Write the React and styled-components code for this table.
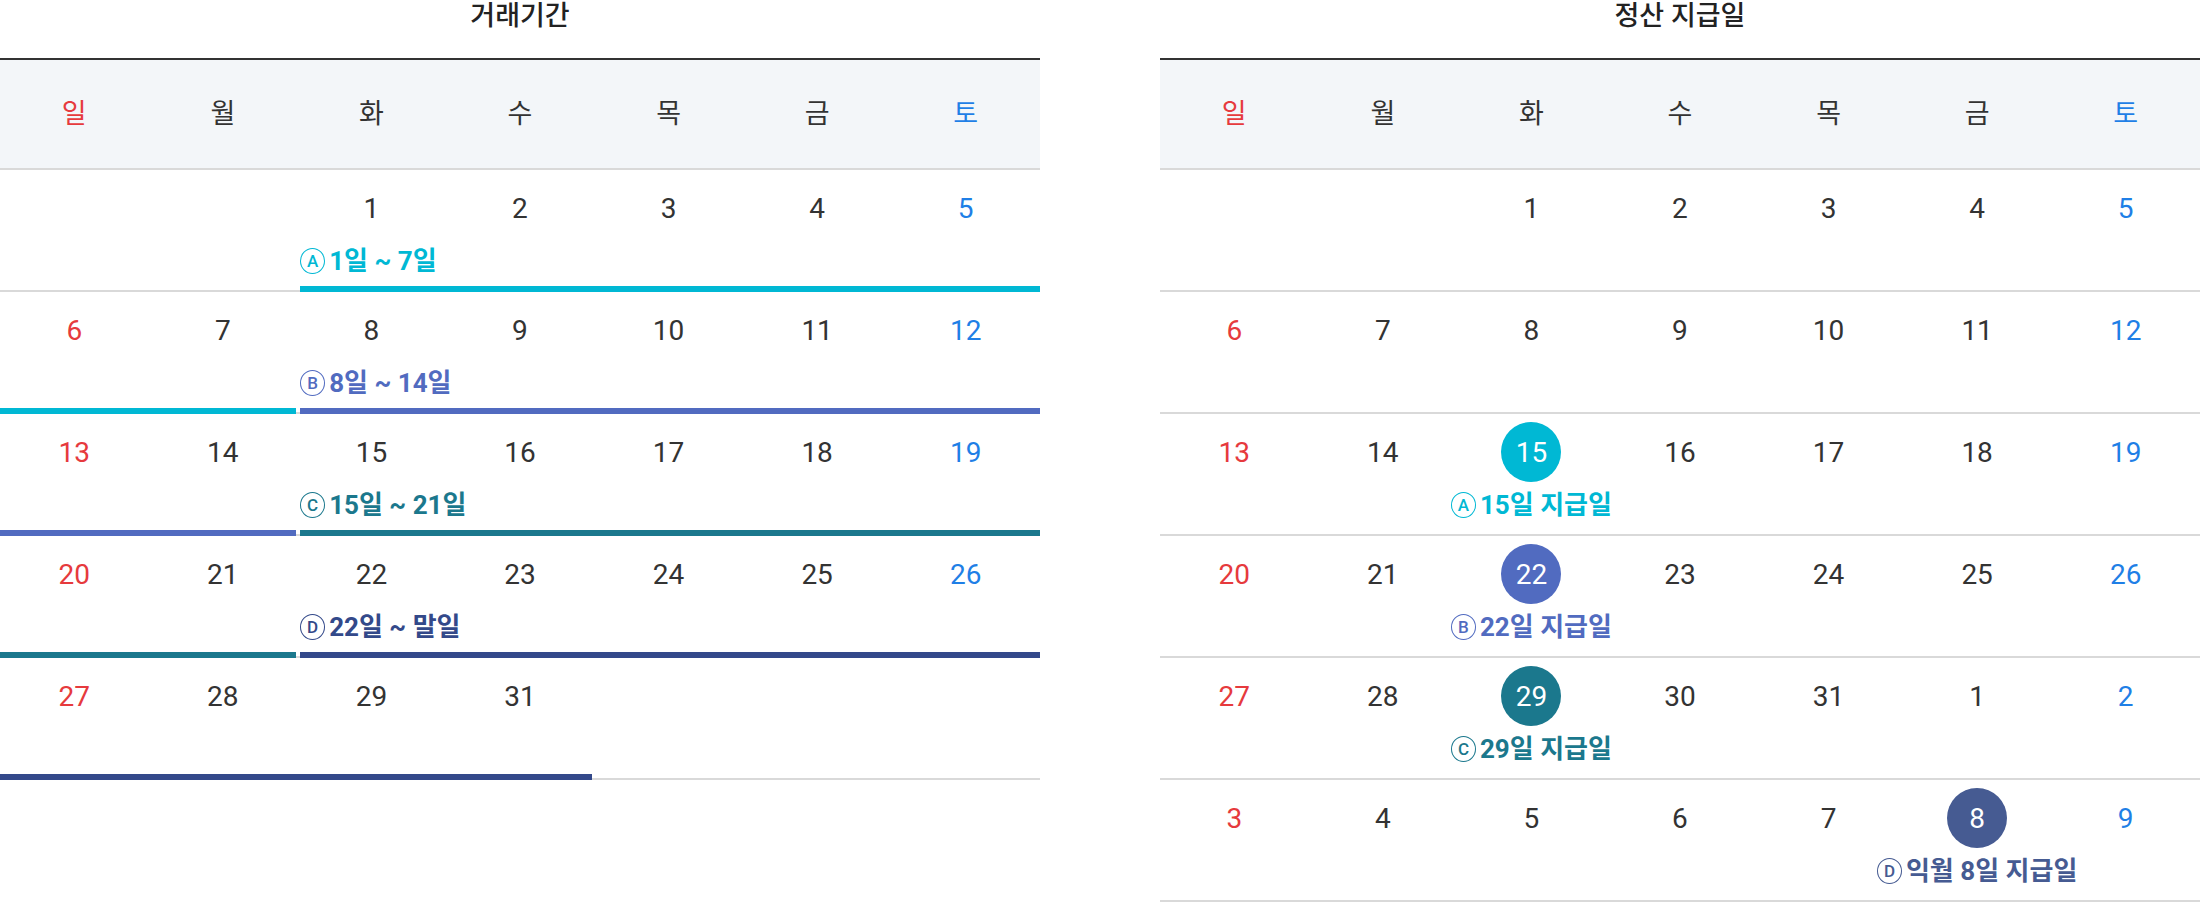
import React from "react";
import styled, { createGlobalStyle } from "styled-components";

const C = {
  cyan: "#00b8d4",
  purple: "#516bc0",
  teal: "#1b788d",
  navy: "#33498a",
  navy2: "#465b92",
  red: "#e63a3d",
  blue: "#1f7fe6",
  text: "#333333",
  line: "#d9d9d9",
  head: "#f3f6f9",
};

const Global = createGlobalStyle`
  html, body { margin: 0; padding: 0; background: #fff; }
  body { font-family: Roboto, "Noto Sans CJK KR", sans-serif; color: ${C.text}; }
`;

const Page = styled.div`
  display: flex;
  gap: 120px;
  width: 2200px;
`;

const Panel = styled.section`
  width: 1040px;
  display: flex;
  flex-direction: column;
`;

const Title = styled.h2`
  margin: 0;
  height: 58px;
  font-size: 27px;
  font-weight: 500;
  line-height: 32px;
  text-align: center;
  color: #222;
`;

const Head = styled.div`
  display: grid;
  grid-template-columns: repeat(7, 1fr);
  height: 108px;
  align-items: center;
  background: ${C.head};
  border-top: 2px solid #333;
  border-bottom: 2px solid ${C.line};
`;

const toneColor = (t) => (t === "sun" ? C.red : t === "sat" ? C.blue : C.text);

const Weekday = styled.div`
  text-align: center;
  font-size: 27px;
  line-height: 32px;
  color: ${(p) => toneColor(p.$tone)};
`;

const Week = styled.div`
  display: flex;
  flex-direction: column;
`;

const Cells = styled.div`
  display: grid;
  grid-template-columns: repeat(7, 1fr);
  height: 116px;
`;

const Cell = styled.div`
  display: flex;
  flex-direction: column;
  align-items: ${(p) => (p.$start ? "flex-start" : "center")};
  padding-top: 8px;
  min-width: 0;
`;

const Day = styled.div`
  align-self: center;
  width: 60px;
  height: 60px;
  border-radius: 50%;
  display: flex;
  align-items: center;
  justify-content: center;
  font-size: 28px;
  background: ${(p) => p.$bg || "transparent"};
  color: ${(p) => (p.$bg ? "#fff" : toneColor(p.$tone))};
`;

const Label = styled.div`
  margin-top: 8px;
  padding-left: ${(p) => (p.$start ? "3px" : "0")};
  display: flex;
  align-items: center;
  white-space: nowrap;
  font-size: 26px;
  line-height: 30px;
  font-weight: 700;
  color: ${(p) => p.$color};
  align-self: ${(p) => (p.$start ? "flex-start" : "center")};
`;

const Mark = styled.span`
  display: inline-flex;
  align-items: center;
  justify-content: center;
  box-sizing: border-box;
  width: 25px;
  height: 26px;
  margin-right: 4px;
  border: 1.6px solid currentColor;
  border-radius: 50%;
  font-family: Roboto, sans-serif;
  font-size: 17px;
  line-height: 1;
  font-weight: 500;
`;

const Track = styled.div`
  display: flex;
  align-items: flex-end;
  height: 6px;
  background: linear-gradient(to top, ${C.line} 2px, transparent 2px);
`;

const Segment = styled.div`
  height: 6px;
  background: ${(p) => p.$color || "transparent"};
  flex: ${(p) => (p.$fill ? "1" : "0 0 auto")};
  margin-right: ${(p) => (p.$gap ? "4px" : "0")};
`;

const weekdays = ["일", "월", "화", "수", "목", "금", "토"];
const tone = (i) => (i === 0 ? "sun" : i === 6 ? "sat" : "");

const range = (a, b) => Array.from({ length: b - a + 1 }, (_, i) => a + i);

const leftWeeks = [
  {
    days: [null, null, 1, 2, 3, 4, 5],
    label: { col: 2, mark: "A", text: "1일 ~ 7일", color: C.cyan },
    segs: [{ w: "calc(200% / 7 + 3px)" }, { color: C.cyan, fill: true }],
  },
  {
    days: range(6, 12),
    label: { col: 2, mark: "B", text: "8일 ~ 14일", color: C.purple },
    segs: [{ w: "calc(200% / 7 - 1px)", color: C.cyan, gap: true }, { color: C.purple, fill: true }],
  },
  {
    days: range(13, 19),
    label: { col: 2, mark: "C", text: "15일 ~ 21일", color: C.teal },
    segs: [{ w: "calc(200% / 7 - 1px)", color: C.purple, gap: true }, { color: C.teal, fill: true }],
  },
  {
    days: range(20, 26),
    label: { col: 2, mark: "D", text: "22일 ~ 말일", color: C.navy },
    segs: [{ w: "calc(200% / 7 - 1px)", color: C.teal, gap: true }, { color: C.navy, fill: true }],
  },
  {
    days: [27, 28, 29, 31, null, null, null],
    segs: [{ w: "calc(400% / 7 - 2px)", color: C.navy }],
  },
];

const rightWeeks = [
  { days: [null, null, 1, 2, 3, 4, 5] },
  { days: range(6, 12) },
  { days: range(13, 19), pay: { col: 2, bg: C.cyan, mark: "A", text: "15일 지급일" } },
  { days: range(20, 26), pay: { col: 2, bg: C.purple, mark: "B", text: "22일 지급일" } },
  { days: [27, 28, 29, 30, 31, 1, 2], pay: { col: 2, bg: C.teal, mark: "C", text: "29일 지급일" } },
  { days: range(3, 9), pay: { col: 5, bg: C.navy2, mark: "D", text: "익월 8일 지급일" } },
];

function Header() {
  return (
    <Head>
      {weekdays.map((w, i) => (
        <Weekday key={w} $tone={tone(i)}>
          {w}
        </Weekday>
      ))}
    </Head>
  );
}

function PeriodCalendar() {
  return (
    <Panel>
      <Title>거래기간</Title>
      <Header />
      {leftWeeks.map((wk, r) => (
        <Week key={r}>
          <Cells>
            {wk.days.map((d, i) => {
              const hasLabel = wk.label && wk.label.col === i;
              return (
                <Cell key={i} $start={hasLabel}>
                  {d !== null && <Day $tone={tone(i)}>{d}</Day>}
                  {hasLabel && (
                    <Label $start $color={wk.label.color}>
                      <Mark>{wk.label.mark}</Mark>
                      {wk.label.text}
                    </Label>
                  )}
                </Cell>
              );
            })}
          </Cells>
          <Track>
            {wk.segs.map((s, k) => (
              <Segment key={k} $color={s.color} $fill={s.fill} $gap={s.gap} style={s.w ? { width: s.w } : undefined} />
            ))}
          </Track>
        </Week>
      ))}
    </Panel>
  );
}

function PayCalendar() {
  return (
    <Panel>
      <Title>정산 지급일</Title>
      <Header />
      {rightWeeks.map((wk, r) => (
        <Week key={r}>
          <Cells>
            {wk.days.map((d, i) => {
              const pay = wk.pay && wk.pay.col === i ? wk.pay : null;
              return (
                <Cell key={i}>
                  {d !== null && (
                    <Day $tone={tone(i)} $bg={pay ? pay.bg : undefined}>
                      {d}
                    </Day>
                  )}
                  {pay && (
                    <Label $color={pay.bg}>
                      <Mark>{pay.mark}</Mark>
                      {pay.text}
                    </Label>
                  )}
                </Cell>
              );
            })}
          </Cells>
          <Track />
        </Week>
      ))}
    </Panel>
  );
}

export default function App() {
  return (
    <>
      <Global />
      <Page>
        <PeriodCalendar />
        <PayCalendar />
      </Page>
    </>
  );
}
